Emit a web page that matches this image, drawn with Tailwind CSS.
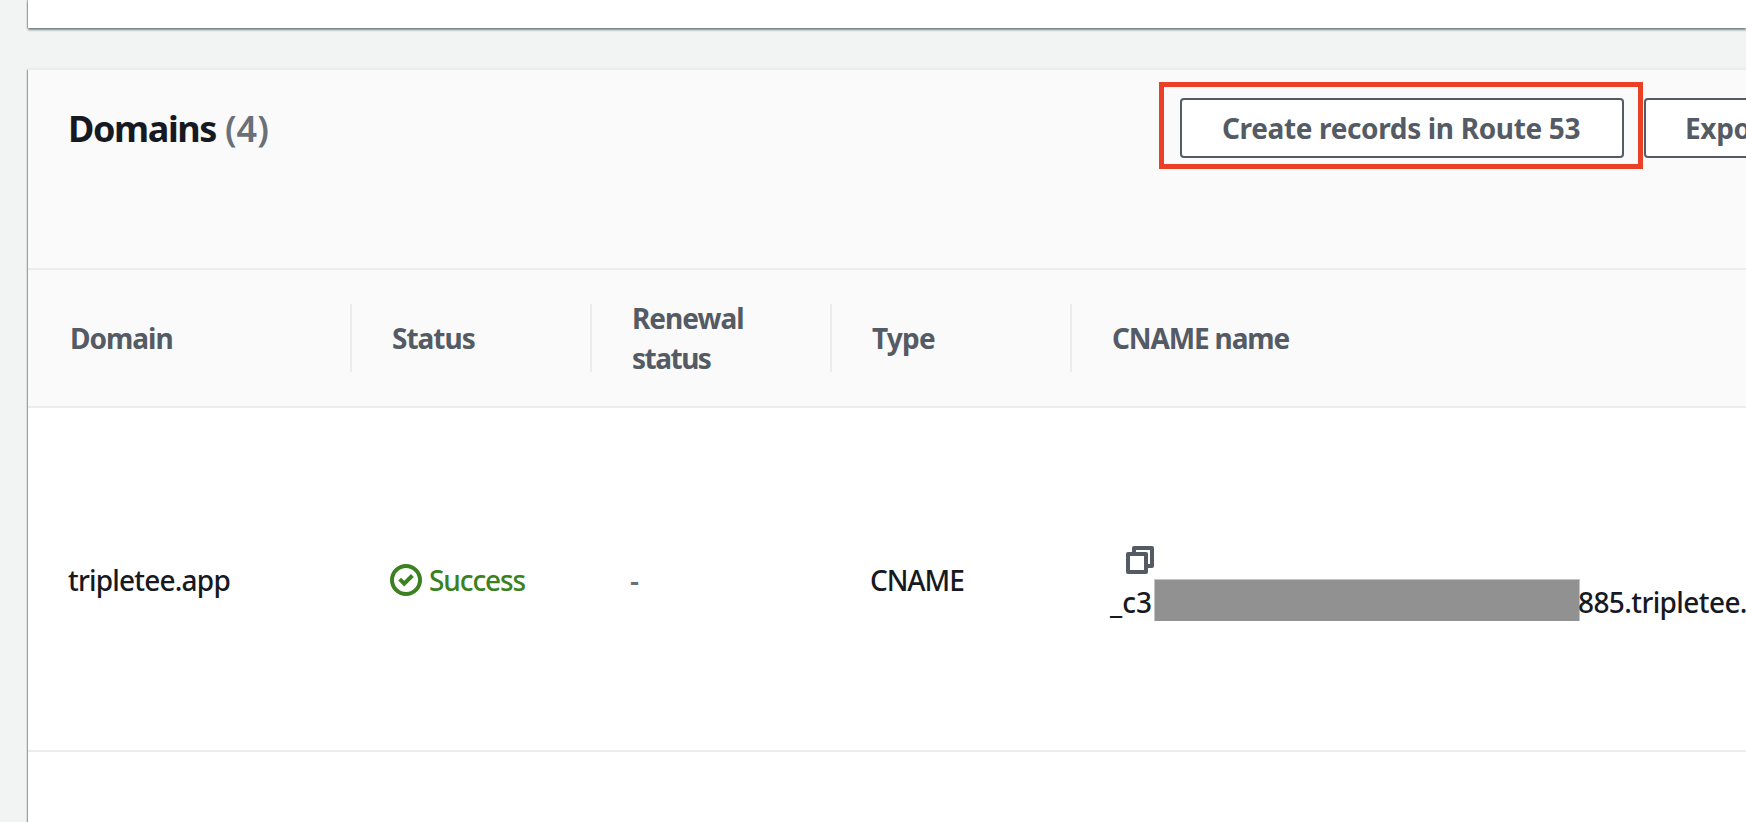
<!DOCTYPE html>
<html lang="en">
<head>
<meta charset="utf-8">
<title>Domains</title>
<script src="https://cdn.jsdelivr.net/npm/@tailwindcss/browser@4"></script>
</head>
<body class="h-[822px] w-[1746px] overflow-hidden bg-[#f2f3f3] pl-7 font-['Noto_Sans',sans-serif] text-[28px] leading-10 text-[#16191f]">
<section class="h-7 bg-white shadow-[0_2px_2px_0_rgba(0,28,36,0.5),-1px_0_1px_0_rgba(0,28,36,0.25)]"></section>
<main class="mt-10 h-[760px] border-t-2 border-[#eaeded] bg-white shadow-[0_2px_2px_0_rgba(0,28,36,0.5),-1px_2px_1px_0_rgba(0,28,36,0.25)]">
  <header class="flex h-[200px] items-start justify-between border-b-2 border-[#eaeded] bg-[#fafafa] pl-10">
    <h2 class="pt-[34px] text-[36px] leading-[50px] font-bold tracking-[-1.4px] whitespace-nowrap">Domains <span class="ml-px font-semibold tracking-[0px] text-[#687078]">(4)</span></h2>
    <div class="flex pt-3">
      <div class="h-[87px] w-[484px] border-[5px] border-[#eb4026] px-4 pt-[11px]">
        <button class="h-[60px] w-[444px] rounded-[4px] border-2 border-[#545b64] bg-white pr-[2px] font-bold tracking-[-0.35px] whitespace-nowrap text-[#545b64]">Create records in Route 53</button>
      </div>
      <div class="w-[103px] overflow-hidden pt-4 pl-px">
        <button class="h-[60px] w-[240px] rounded-[4px] border-2 border-[#545b64] bg-white pl-[39px] text-left font-bold tracking-[-0.35px] text-[#545b64]">Export</button>
      </div>
    </div>
  </header>
  <div class="grid h-[138px] grid-cols-[324px_240px_240px_240px_1fr] items-center border-b-2 border-[#eaeded] bg-[#fafafa] font-bold tracking-[-1px] text-[#545b64]">
    <div class="flex h-[68px] items-center border-r-2 border-[#eaeded] pl-[42px]">Domain</div>
    <div class="flex h-[68px] items-center border-r-2 border-[#eaeded] pl-10">Status</div>
    <div class="flex h-[68px] items-center border-r-2 border-[#eaeded] pl-10"><div>Renewal<br><span class="tracking-[-1.5px]">status</span></div></div>
    <div class="flex h-[68px] items-center border-r-2 border-[#eaeded] pl-10 tracking-[-0.8px]">Type</div>
    <div class="pl-10 tracking-[-1.15px]">CNAME name</div>
  </div>
  <div class="grid h-[344px] grid-cols-[324px_240px_240px_240px_1fr] items-center border-b-2 border-[#eaeded] font-medium">
    <div class="pt-px pl-10 tracking-[-0.8px]">tripletee.app</div>
    <div class="flex items-center gap-[7px] pl-[38px] text-[#3b8120]">
      <svg class="mt-0.5 size-8" viewBox="0 0 32 32" fill="none" stroke="currentColor" stroke-width="4"><circle cx="16" cy="16" r="14"/><path d="M9.7 15.2l4.5 4.5 8.2-8.2"/></svg>
      <span class="pt-px tracking-[-1.1px]">Success</span>
    </div>
    <div class="pt-px pl-[38px] font-semibold text-[#687078]">-</div>
    <div class="pt-px pl-[38px] tracking-[-1.1px]">CNAME</div>
    <div class="overflow-hidden pt-[9px] pl-[38px] whitespace-nowrap">
      <svg class="ml-4 block size-7" viewBox="0 0 28 28" fill="none" stroke="#545b64" stroke-width="4" stroke-linejoin="round"><path d="M2 8h18v18H2zM8 8V2h18v18h-6"/></svg>
      <div class="mt-[5px] -mb-px flex items-center">
        <span class="w-11 shrink-0 pt-[3px]">_c3</span>
        <span class="h-[43px] w-[426px] shrink-0 border border-[#c4c4c4] bg-[#919191]"></span>
        <span class="-ml-[2px] pt-[3px] tracking-[-0.6px]">885.tripletee.</span>
      </div>
    </div>
  </div>
</main>
</body>
</html>
